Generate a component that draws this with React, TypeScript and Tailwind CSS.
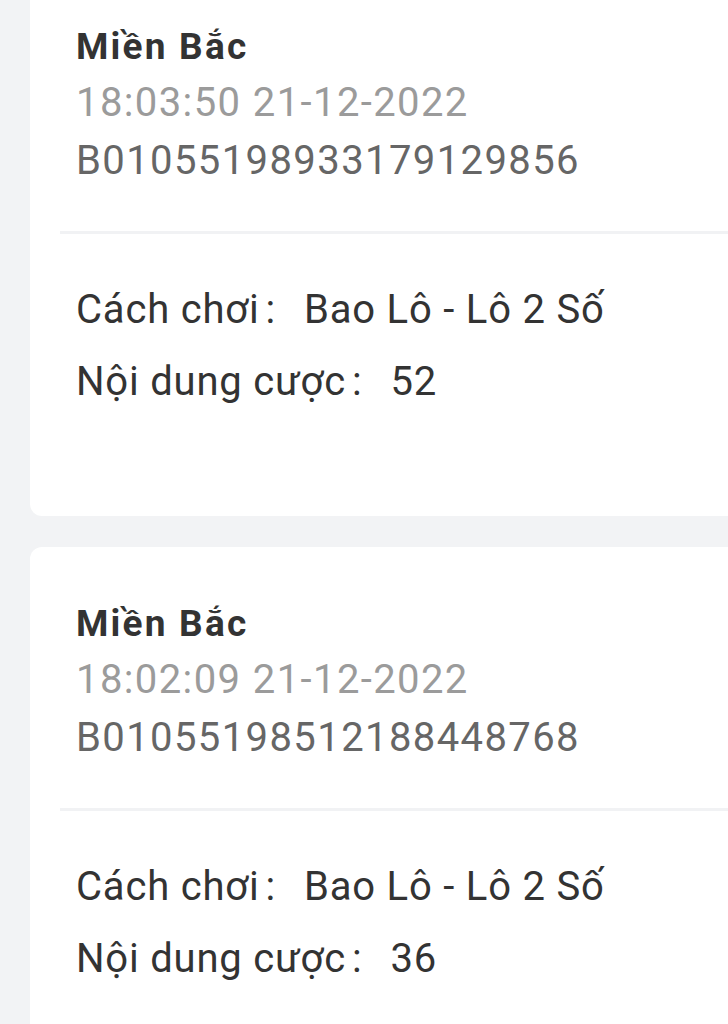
import React from "react";

type Bet = { time: string; code: string; play: string; content: string };

const bets: Bet[] = [
  { time: "18:03:50 21-12-2022", code: "B01055198933179129856", play: "Bao Lô - Lô 2 Số", content: "52" },
  { time: "18:02:09 21-12-2022", code: "B01055198512188448768", play: "Bao Lô - Lô 2 Số", content: "36" },
];

function Row({ label, value }: { label: string; value: string }) {
  return (
    <div className="flex items-baseline">
      <span>{label}</span>
      <span className="ml-[6px] mr-[28px]">:</span>
      <span>{value}</span>
    </div>
  );
}

function Card({ bet }: { bet: Bet }) {
  return (
    <div className="bg-white rounded-l-[12px] w-[698px] shrink-0">
      <div className="pl-[46px] pt-[49px] pb-[41px]">
        <div className="text-[37px] leading-[55px] font-bold text-[#333333] tracking-[2.2px]">Miền Bắc</div>
        <div className="text-[40px] leading-[58px] text-[#9b9b9b] tracking-[1.4px]">{bet.time}</div>
        <div className="text-[40px] leading-[58px] text-[#666666] tracking-[1.4px]">{bet.code}</div>
      </div>
      <div className="ml-[30px] h-[3px] bg-[#f1f2f4]" />
      <div className="pl-[46px] pt-[40px] pb-[98px] text-[40px] leading-[72px] text-[#333333] tracking-[0.8px]">
        <Row label="Cách chơi" value={bet.play} />
        <Row label="Nội dung cược" value={bet.content} />
      </div>
    </div>
  );
}

export default function App() {
  return (
    <div className="min-h-screen bg-[#f2f3f5] overflow-hidden" style={{ fontFamily: "Roboto, 'Noto Sans', sans-serif" }}>
      <div className="pl-[30px] mt-[-30px] flex flex-col gap-[31px]">
        {bets.map((b, i) => (
          <Card key={i} bet={b} />
        ))}
      </div>
    </div>
  );
}
